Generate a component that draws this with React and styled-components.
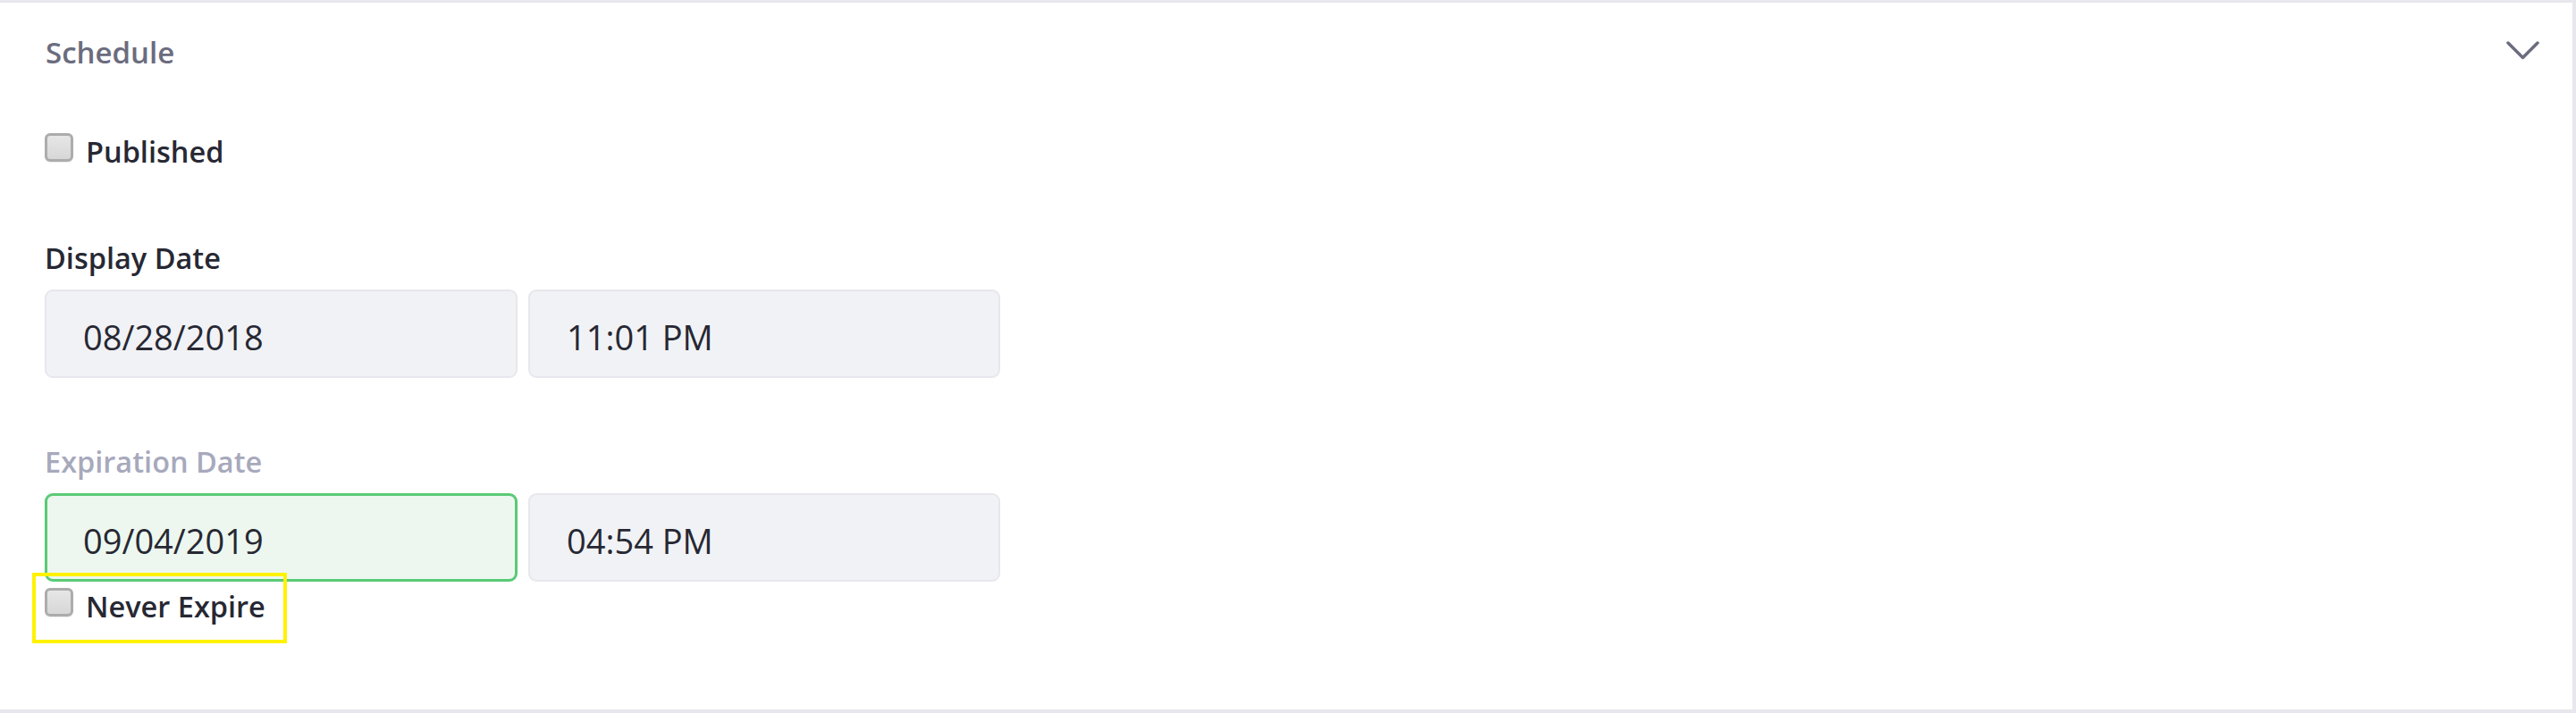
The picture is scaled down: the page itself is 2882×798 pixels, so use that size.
import styled, { createGlobalStyle } from "styled-components";

const GlobalStyle = createGlobalStyle`
  body {
    margin: 0;
    background: #fff;
    font-family: "Open Sans", "Noto Sans", sans-serif;
  }
`;

const Panel = styled.section`
  box-sizing: border-box;
  width: 2882px;
  height: 798px;
  background: #fff;
  border-style: solid;
  border-color: #e7e7ed;
  border-width: 3px 4px 4px 0;
`;

const Header = styled.header`
  display: flex;
  align-items: center;
  justify-content: space-between;
  height: 50px;
  padding: 31px 37px 0 51px;
`;

const Title = styled.span`
  font-size: 33px;
  font-weight: 600;
  line-height: 50px;
  color: #6b6c7e;
`;

const Chevron = styled.svg`
  width: 37px;
  height: 22px;
  margin-bottom: 5px;
  color: #6b6c7e;
`;

const Body = styled.div`
  padding: 61px 0 0 50px;
`;

const CheckRow = styled.label`
  position: relative;
  display: flex;
  align-items: flex-start;
  gap: 14px;
  width: max-content;
  height: 50px;
  margin-top: ${(p) => p.$mt || 0}px;
  font-size: 32.5px;
  font-weight: 600;
  line-height: 50px;
  color: #272833;
`;

const Box = styled.input.attrs({ type: "checkbox" })`
  appearance: none;
  flex: none;
  box-sizing: border-box;
  width: 32px;
  height: 32px;
  margin: 4px 0 0;
  border: 3px solid #acacac;
  border-radius: 6px;
  background: linear-gradient(#e6e6e6, #d7d7d7);
  box-shadow: 0 1px 0 #ececec;
`;

const Highlight = styled.span`
  position: absolute;
  left: -14px;
  top: -13px;
  width: 285px;
  height: 79px;
  box-sizing: border-box;
  border: 4px solid #fff200;
  pointer-events: none;
  z-index: 1;
`;

const Field = styled.div`
  margin-top: 69px;
`;

const Label = styled.div`
  margin-bottom: 10px;
  font-size: 32.5px;
  font-weight: 600;
  line-height: 50px;
  color: ${(p) => (p.$disabled ? "#a7a9bc" : "#272833")};
`;

const Row = styled.div`
  display: grid;
  grid-template-columns: 529px 528px;
  gap: 12px;
`;

const DateInput = styled.input`
  box-sizing: border-box;
  width: 100%;
  height: 99px;
  margin: 0;
  padding: 6px 41px 0;
  border: 2px solid ${(p) => (p.$valid ? "#5aca75" : "#e7e7ed")};
  border-width: ${(p) => (p.$valid ? "3px" : "2px")};
  padding-left: ${(p) => (p.$valid ? "40px" : "41px")};
  border-radius: 9px;
  background: ${(p) => (p.$valid ? "#edf7ef" : "#f1f2f5")};
  font-family: "Open Sans", "Noto Sans", sans-serif;
  font-size: 38px;
  color: #272833;
  outline: none;
`;

const App = () => {
  return (
    <>
      <GlobalStyle />
      <Panel>
        <Header>
          <Title>Schedule</Title>
          <Chevron viewBox="0 0 37 22" fill="none">
            <path
              d="M2 2 L18.5 18.5 L35 2"
              stroke="currentColor"
              strokeWidth="3.5"
              strokeLinecap="round"
              strokeLinejoin="round"
            />
          </Chevron>
        </Header>
        <Body>
          <CheckRow>
            <Box />
            Published
          </CheckRow>

          <Field>
            <Label>Display Date</Label>
            <Row>
              <DateInput readOnly value="08/28/2018" />
              <DateInput readOnly value="11:01 PM" />
            </Row>
          </Field>

          <Field>
            <Label $disabled>Expiration Date</Label>
            <Row>
              <DateInput $valid readOnly value="09/04/2019" />
              <DateInput readOnly value="04:54 PM" />
            </Row>
          </Field>

          <CheckRow $mt={3}>
            <Highlight />
            <Box />
            Never Expire
          </CheckRow>
        </Body>
      </Panel>
    </>
  );
};

export default App;
